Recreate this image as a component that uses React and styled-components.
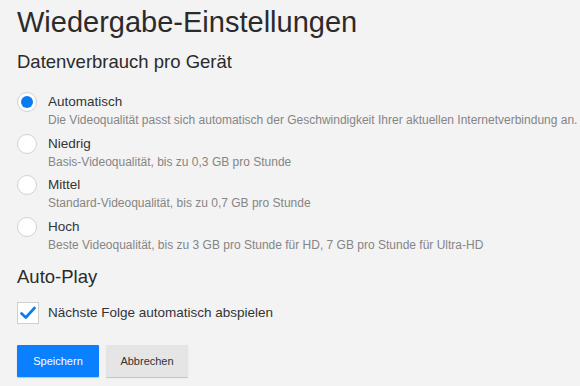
import React, { useState } from "react";
import styled, { createGlobalStyle } from "styled-components";

const GlobalStyle = createGlobalStyle`
  html, body {
    margin: 0;
    padding: 0;
    background: #f3f3f3;
    font-family: "Liberation Sans", Arial, sans-serif;
    color: #333;
  }
`;

const options = [
  {
    id: "auto",
    label: "Automatisch",
    desc: "Die Videoqualität passt sich automatisch der Geschwindigkeit Ihrer aktuellen Internetverbindung an.",
  },
  { id: "low", label: "Niedrig", desc: "Basis-Videoqualität, bis zu 0,3 GB pro Stunde" },
  { id: "mid", label: "Mittel", desc: "Standard-Videoqualität, bis zu 0,7 GB pro Stunde" },
  {
    id: "high",
    label: "Hoch",
    desc: "Beste Videoqualität, bis zu 3 GB pro Stunde für HD, 7 GB pro Stunde für Ultra-HD",
  },
];

const App = () => {
  const [quality, setQuality] = useState("auto");
  const [autoplay, setAutoplay] = useState(true);

  return (
    <>
      <GlobalStyle />
      <Page>
        <Title>Wiedergabe-Einstellungen</Title>
        <SectionTitle>Datenverbrauch pro Gerät</SectionTitle>
        <OptionList>
          {options.map((o) => (
            <Option key={o.id} onClick={() => setQuality(o.id)}>
              <Radio $checked={quality === o.id} />
              <OptionText>
                <OptionLabel>{o.label}</OptionLabel>
                <OptionDesc>{o.desc}</OptionDesc>
              </OptionText>
            </Option>
          ))}
        </OptionList>
        <SectionTitle $autoplay>Auto-Play</SectionTitle>
        <CheckRow onClick={() => setAutoplay(!autoplay)}>
          <CheckBox>
            {autoplay && (
              <svg width="16" height="14" viewBox="0 0 16 14">
                <path
                  d="M1.5 7.5 L5.8 11.5 L14.5 2"
                  fill="none"
                  stroke="#0a7cf0"
                  strokeWidth="2.6"
                  strokeLinecap="round"
                  strokeLinejoin="round"
                />
              </svg>
            )}
          </CheckBox>
          <CheckLabel>Nächste Folge automatisch abspielen</CheckLabel>
        </CheckRow>
        <Buttons>
          <Button $primary>Speichern</Button>
          <Button>Abbrechen</Button>
        </Buttons>
      </Page>
    </>
  );
};

const Page = styled.div`
  padding: 0 17px;
  width: 580px;
  height: 386px;
  box-sizing: border-box;
  overflow: hidden;
`;

const Title = styled.h1`
  margin: 0;
  padding-top: 3px;
  font-size: 29px;
  font-weight: normal;
  line-height: 38px;
  color: #2b2b2b;
  white-space: nowrap;
`;

const SectionTitle = styled.h2`
  margin: ${(p) => (p.$autoplay ? "9px 0 0" : "9px 0 0")};
  font-size: 18.5px;
  font-weight: normal;
  line-height: 24px;
  color: #2b2b2b;
`;

const OptionList = styled.div`
  display: flex;
  flex-direction: column;
  gap: 4px;
  margin-top: 19px;
`;

const Option = styled.div`
  display: flex;
  align-items: flex-start;
  gap: 11px;
  cursor: pointer;
`;

const Radio = styled.span`
  flex: none;
  box-sizing: border-box;
  width: 20px;
  height: 20px;
  border-radius: 50%;
  background: #fff;
  border: 1px solid #d2d2d2;
  margin-top: -1px;
  position: relative;
  &::after {
    content: "";
    display: ${(p) => (p.$checked ? "block" : "none")};
    position: absolute;
    left: 3px;
    top: 3px;
    width: 12px;
    height: 12px;
    border-radius: 50%;
    background: #0a7cf0;
  }
`;

const OptionText = styled.div`
  display: flex;
  flex-direction: column;
`;

const OptionLabel = styled.div`
  font-size: 13.5px;
  line-height: 18px;
  color: #333;
`;

const OptionDesc = styled.div`
  font-size: 12px;
  line-height: 19.7px;
  color: #858585;
  white-space: nowrap;
`;

const CheckRow = styled.div`
  display: flex;
  align-items: center;
  gap: 9px;
  margin-top: 13px;
  cursor: pointer;
`;

const CheckBox = styled.span`
  flex: none;
  width: 22px;
  height: 22px;
  box-sizing: border-box;
  background: #fff;
  border: 1px solid #cfcfcf;
  display: flex;
  align-items: center;
  justify-content: center;
`;

const CheckLabel = styled.span`
  font-size: 13.5px;
  color: #333;
`;

const Buttons = styled.div`
  display: flex;
  gap: 7px;
  margin-top: 21px;
`;

const Button = styled.button`
  width: 82px;
  height: 32px;
  border: none;
  border-radius: 1px;
  font-family: "Liberation Sans", Arial, sans-serif;
  font-size: 11px;
  color: ${(p) => (p.$primary ? "#fff" : "#333")};
  background: ${(p) => (p.$primary ? "#0a80ff" : "#e5e5e5")};
  box-shadow: 0 1px 1px rgba(0, 0, 0, 0.2);
  cursor: pointer;
`;

export default App;
